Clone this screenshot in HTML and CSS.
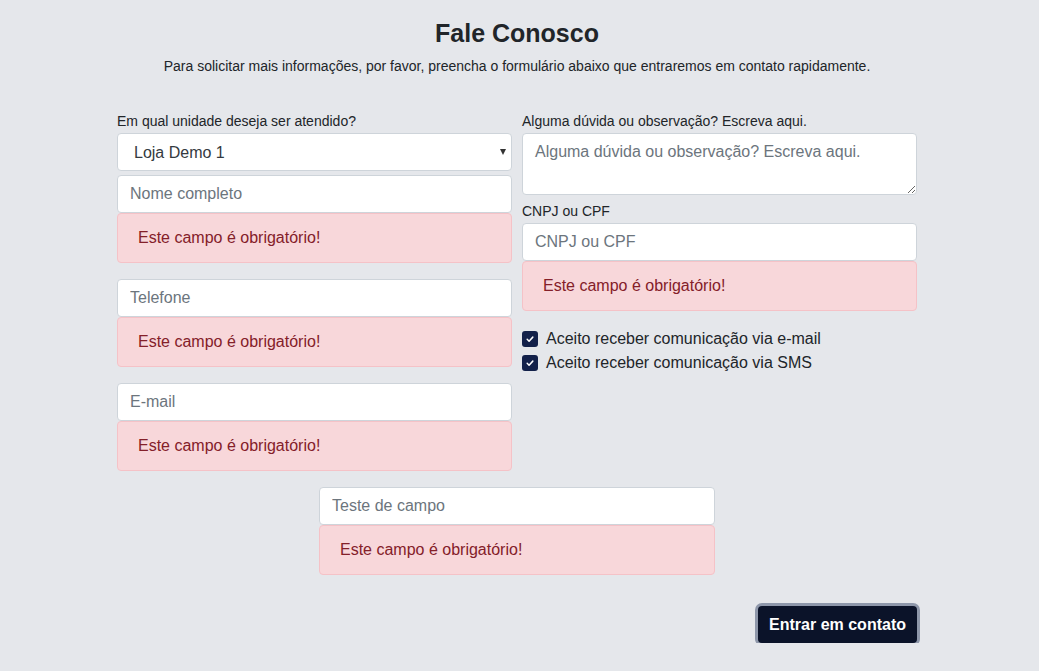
FILE: index.html
```html
<!DOCTYPE html>
<html lang="pt-BR">
<head>
<meta charset="utf-8">
<title>Fale Conosco</title>
<link rel="stylesheet" href="styles.css">
</head>
<body>
<main class="page">
  <header class="head">
    <h1 class="title">Fale Conosco</h1>
    <p class="subtitle">Para solicitar mais informações, por favor, preencha o formulário abaixo que entraremos em contato rapidamente.</p>
  </header>
  <form class="form">
    <div class="cols">
      <div class="col">
        <label class="label">Em qual unidade deseja ser atendido?</label>
        <div class="select-wrap">
          <select class="select"><option>Loja Demo 1</option></select>
          <span class="caret"></span>
        </div>
        <div class="group">
          <input class="field" type="text" placeholder="Nome completo">
          <div class="alert">Este campo é obrigatório!</div>
        </div>
        <div class="group">
          <input class="field" type="text" placeholder="Telefone">
          <div class="alert">Este campo é obrigatório!</div>
        </div>
        <div class="group">
          <input class="field" type="text" placeholder="E-mail">
          <div class="alert">Este campo é obrigatório!</div>
        </div>
      </div>
      <div class="col">
        <label class="label">Alguma dúvida ou observação? Escreva aqui.</label>
        <textarea class="field area" placeholder="Alguma dúvida ou observação? Escreva aqui."></textarea>
        <label class="label">CNPJ ou CPF</label>
        <div class="group-r">
          <input class="field" type="text" placeholder="CNPJ ou CPF">
          <div class="alert">Este campo é obrigatório!</div>
        </div>
        <div class="checks">
          <label class="check"><span class="box"><svg viewBox="0 0 16 16" width="10" height="10"><path d="M3.5 8.5l3 3 6-6.5" fill="none" stroke="#fff" stroke-width="2.4" stroke-linecap="round" stroke-linejoin="round"/></svg></span>Aceito receber comunicação via e-mail</label>
          <label class="check"><span class="box"><svg viewBox="0 0 16 16" width="10" height="10"><path d="M3.5 8.5l3 3 6-6.5" fill="none" stroke="#fff" stroke-width="2.4" stroke-linecap="round" stroke-linejoin="round"/></svg></span>Aceito receber comunicação via SMS</label>
        </div>
      </div>
    </div>
    <div class="center">
      <div class="group center-group">
        <input class="field" type="text" placeholder="Teste de campo">
        <div class="alert">Este campo é obrigatório!</div>
      </div>
    </div>
    <div class="actions">
      <button type="button" class="btn">Entrar em contato</button>
    </div>
  </form>
</main>
</body>
</html>
```
FILE: styles.css
```css
* { box-sizing: border-box; }
html, body { margin: 0; padding: 0; }
body {
  background: #e5e7eb;
  font-family: "Liberation Sans", Arial, sans-serif;
  color: #212529;
  padding-right: 5px;
}
.page {
  width: 800px;
  margin: 0 auto;
  padding-top: 18px;
}
.head { text-align: center; }
.title {
  margin: 0;
  font-size: 25px;
  line-height: 30px;
  font-weight: 700;
  color: #212529;
}
.subtitle {
  margin: 8px -60px 0;
  font-size: 14px;
  line-height: 20px;
}
.form { margin-top: 35px; }
.cols {
  display: flex;
  gap: 10px;
}
.col {
  flex: 1;
  display: flex;
  flex-direction: column;
  min-width: 0;
}
.label {
  font-size: 14px;
  line-height: 21px;
  margin-bottom: 1px;
}
.field {
  display: block;
  width: 100%;
  height: 38px;
  border: 1px solid #ced4da;
  border-radius: 4px;
  background: #fff;
  padding: 6px 12px;
  font-family: inherit;
  font-size: 16px;
  color: #212529;
}
.field::placeholder { color: #6c757d; opacity: 1; }
.area {
  height: 62px;
  resize: vertical;
  margin-bottom: 6px;
  line-height: 24px;
  padding: 6px 12px;
}
.select-wrap { position: relative; margin-bottom: 4px; }
.select {
  display: block;
  width: 100%;
  height: 38px;
  border: 1px solid #ced4da;
  border-radius: 4px;
  background: #fff;
  padding: 6px 16px;
  font-family: inherit;
  font-size: 16px;
  color: #343a40;
  -webkit-appearance: none;
  appearance: none;
}
.caret {
  position: absolute;
  right: 6px;
  top: 16px;
  width: 0;
  height: 0;
  border-left: 3px solid transparent;
  border-right: 3px solid transparent;
  border-top: 6px solid #333;
  pointer-events: none;
}
.group { margin-bottom: 16px; }
.alert {
  height: 50px;
  display: flex;
  align-items: center;
  padding: 0 20px;
  background: #f8d7da;
  border: 1px solid #f5c2c7;
  border-radius: 4px;
  color: #842029;
  font-size: 16px;
}
.checks {
  margin-top: 16px;
  display: flex;
  flex-direction: column;
}
.check {
  display: flex;
  align-items: center;
  gap: 8px;
  font-size: 16px;
  line-height: 24px;
  color: #212529;
}
.box {
  width: 16px;
  height: 16px;
  border-radius: 3px;
  background: #13214a;
  display: flex;
  align-items: center;
  justify-content: center;
}
.center {
  display: flex;
  justify-content: center;
}
.center-group { width: 396px; margin-bottom: 0; }
.actions {
  display: flex;
  justify-content: flex-end;
  margin-top: 31px;
}
.btn {
  height: 37px;
  padding: 0 11px;
  background: #0b1329;
  color: #fff;
  border: none;
  border-radius: 4px;
  box-shadow: 0 0 0 3px #8e97aa;
  font-family: inherit;
  font-size: 16px;
  font-weight: 700;
}
```
